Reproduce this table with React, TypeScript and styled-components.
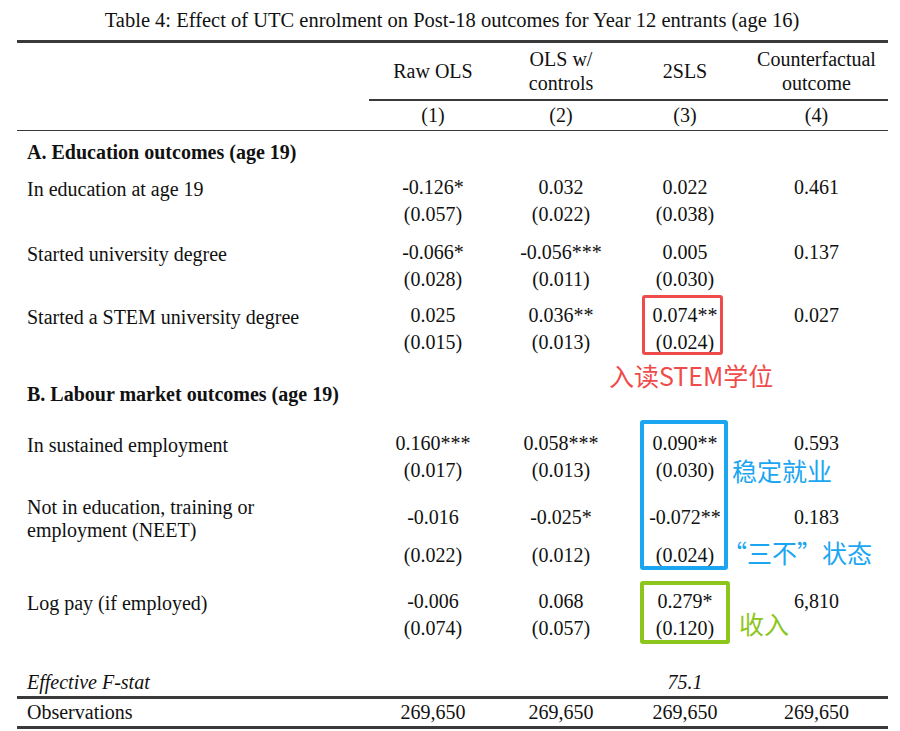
import React from 'react';
import styled, {createGlobalStyle} from 'styled-components';

const GlobalStyle = createGlobalStyle`
    html, body {
        margin: 0;
        padding: 0;
        background: #FFFFFF;
    }
    body {
        font-family: "Liberation Serif", "Times New Roman", serif;
        color: #111111;
    }
`;

const Page = styled.div`
    position: relative;
    width: 900px;
    height: 731px;
    overflow: hidden;
    background: #FFFFFF;
`;

const Title = styled.div`
    height: 40px;
    line-height: 40px;
    font-size: 20.5px;
    text-align: center;
    padding-left: 4px;
`;

const Table = styled.div`
    margin-left: 17px;
    width: 871px;
    display: flex;
    flex-direction: column;
`;

const Rule = styled.div<{$size: number; $indent?: number}>`
    height: ${(p) => p.$size}px;
    margin-left: ${(p) => p.$indent || 0}px;
    background: #3a3a3a;
`;

const Grid = styled.div<{$height?: number; $top?: number}>`
    display: grid;
    grid-template-columns: 352px 128px 128px 120px 143px;
    height: ${(p) => (p.$height ? `${p.$height}px` : 'auto')};
    margin-top: ${(p) => p.$top || 0}px;
    font-size: 20px;
`;

const HeadCell = styled.div`
    display: flex;
    align-items: center;
    justify-content: center;
    text-align: center;
    line-height: 24px;
`;

const SectionTitle = styled.div<{$height: number; $pad: number}>`
    height: ${(p) => p.$height}px;
    padding-top: ${(p) => p.$pad}px;
    box-sizing: border-box;
    padding-left: 10px;
    font-size: 20px;
    font-weight: 700;
    line-height: 27px;
`;

const Label = styled.div<{$pad?: number; $line?: number}>`
    padding-left: 10px;
    padding-top: ${(p) => p.$pad || 0}px;
    line-height: ${(p) => p.$line || 27}px;
`;

const Values = styled.div<{$pad?: number; $gap?: number}>`
    display: flex;
    flex-direction: column;
    align-items: center;
    padding-top: ${(p) => p.$pad || 0}px;
    gap: ${(p) => p.$gap || 0}px;
`;

const Line = styled.div<{$italic?: boolean}>`
    height: 27px;
    line-height: 27px;
    white-space: nowrap;
    font-style: ${(p) => (p.$italic ? 'italic' : 'normal')};
`;

const Box = styled.div<{$color: string; $border: number}>`
    position: absolute;
    box-sizing: border-box;
    border: ${(p) => p.$border}px solid ${(p) => p.$color};
    border-radius: 3px;
`;

const Note = styled.div<{$color: string}>`
    position: absolute;
    font-family: "Noto Sans CJK SC", "Noto Sans", sans-serif;
    font-size: 25px;
    line-height: 24px;
    white-space: nowrap;
    color: ${(p) => p.$color};
`;

type Row = {
    label: string;
    coef: string[];
    se: string[];
    top: number;
};

const eduRows: Row[] = [
    {label: 'In education at age 19', coef: ['-0.126*', '0.032', '0.022', '0.461'], se: ['(0.057)', '(0.022)', '(0.038)', ''], top: 0},
    {label: 'Started university degree', coef: ['-0.066*', '-0.056***', '0.005', '0.137'], se: ['(0.028)', '(0.011)', '(0.030)', ''], top: 11},
    {label: 'Started a STEM university degree', coef: ['0.025', '0.036**', '0.074**', '0.027'], se: ['(0.015)', '(0.013)', '(0.024)', ''], top: 9},
];

const RED = '#F04B4B';
const BLUE = '#1BA6F2';
const GREEN = '#8CC61C';

const renderRow = (row: Row) => (
    <Grid key={row.label} $top={row.top}>
        <Label $pad={2}>{row.label}</Label>
        {row.coef.map((c, i) => (
            <Values key={i}>
                <Line>{c}</Line>
                <Line>{row.se[i]}</Line>
            </Values>
        ))}
    </Grid>
);

const App = () => {
    return (
        <Page>
            <GlobalStyle/>
            <Title>Table 4: Effect of UTC enrolment on Post-18 outcomes for Year 12 entrants (age 16)</Title>
            <Table>
                <Rule $size={3}/>
                <Grid $height={56}>
                    <div/>
                    <HeadCell>Raw OLS</HeadCell>
                    <HeadCell>OLS w/<br/>controls</HeadCell>
                    <HeadCell>2SLS</HeadCell>
                    <HeadCell>Counterfactual<br/>outcome</HeadCell>
                </Grid>
                <Rule $size={1.5} $indent={352}/>
                <Grid $height={29}>
                    <div/>
                    <HeadCell>(1)</HeadCell>
                    <HeadCell>(2)</HeadCell>
                    <HeadCell>(3)</HeadCell>
                    <HeadCell>(4)</HeadCell>
                </Grid>
                <Rule $size={1.5}/>
                <SectionTitle $height={43} $pad={8}>A. Education outcomes (age 19)</SectionTitle>
                {eduRows.map(renderRow)}
                <SectionTitle $height={74} $pad={25}>B. Labour market outcomes (age 19)</SectionTitle>
                {renderRow({label: 'In sustained employment', coef: ['0.160***', '0.058***', '0.090**', '0.593'], se: ['(0.017)', '(0.013)', '(0.030)', ''], top: 0})}
                <Grid $top={12} $height={73}>
                    <Label $line={23}>Not in education, training or<br/>employment (NEET)</Label>
                    {[['-0.016', '(0.022)'], ['-0.025*', '(0.012)'], ['-0.072**', '(0.024)'], ['0.183', '']].map(([c, s], i) => (
                        <Values key={i} $pad={8} $gap={11}>
                            <Line>{c}</Line>
                            <Line>{s}</Line>
                        </Values>
                    ))}
                </Grid>
                {renderRow({label: 'Log pay (if employed)', coef: ['-0.006', '0.068', '0.279*', '6,810'], se: ['(0.074)', '(0.057)', '(0.120)', ''], top: 19})}
                <Grid $height={54}>
                    <Label $pad={27}><Line $italic>Effective F-stat</Line></Label>
                    <div/>
                    <div/>
                    <Values $pad={27}><Line $italic>75.1</Line></Values>
                    <div/>
                </Grid>
                <Rule $size={2.5}/>
                <Grid $height={27}>
                    <Label>Observations</Label>
                    <Values><Line>269,650</Line></Values>
                    <Values><Line>269,650</Line></Values>
                    <Values><Line>269,650</Line></Values>
                    <Values><Line>269,650</Line></Values>
                </Grid>
                <Rule $size={3}/>
            </Table>

            <Box $color={RED} $border={3} style={{left: 642, top: 295, width: 81, height: 60}}/>
            <Note $color={RED} style={{left: 609, top: 363}}>入读STEM学位</Note>

            <Box $color={BLUE} $border={4} style={{left: 640, top: 420, width: 88, height: 150}}/>
            <Note $color={BLUE} style={{left: 732, top: 458}}>稳定就业</Note>
            <Note $color={BLUE} style={{left: 722, top: 540}}>“三不”状态</Note>

            <Box $color={GREEN} $border={4} style={{left: 640, top: 581, width: 90, height: 63}}/>
            <Note $color={GREEN} style={{left: 739, top: 611}}>收入</Note>
        </Page>
    );
};

export default App;
